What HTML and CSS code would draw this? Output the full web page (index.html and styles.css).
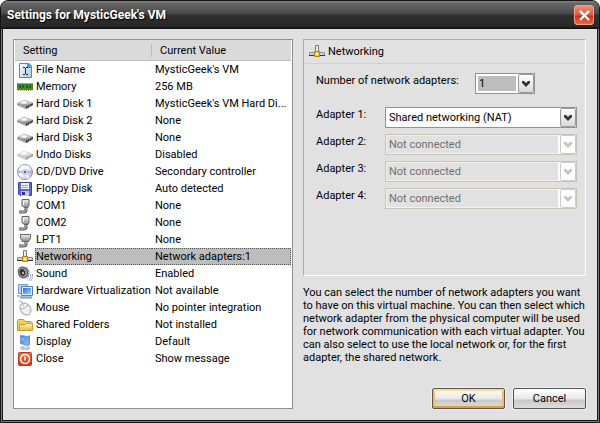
FILE: index.html
```html
<!DOCTYPE html>
<html lang="en">
<head>
<meta charset="utf-8">
<title>Settings for MysticGeek's VM</title>
<link rel="stylesheet" href="styles.css">
</head>
<body>
<svg class="defs" aria-hidden="true">
  <defs>
    <linearGradient id="metal" x2="0" y2="1"><stop stop-color="#f4f4f4"/><stop offset="1" stop-color="#858585"/></linearGradient>
    <linearGradient id="screen" x2="1" y2="1"><stop stop-color="#2d6fd8"/><stop offset="1" stop-color="#8fd4ff"/></linearGradient>
    <linearGradient id="page" x2="1" y2="1"><stop stop-color="#fff"/><stop offset="1" stop-color="#a9c8ee"/></linearGradient>
    <linearGradient id="gold" x2="0" y2="1"><stop stop-color="#fff6c4"/><stop offset="1" stop-color="#eeb834"/></linearGradient>
    <linearGradient id="disc" x2="1" y2="1"><stop stop-color="#d9dbf2"/><stop offset=".4" stop-color="#fff"/><stop offset="1" stop-color="#a6a8dc"/></linearGradient>
    <linearGradient id="red" x2="0" y2="1"><stop stop-color="#f0714e"/><stop offset="1" stop-color="#d8330d"/></linearGradient>
    <symbol id="i-file" viewBox="0 0 16 16"><path d="M2.500 1.500h8l4 4v10h-12z" fill="url(#page)" stroke="#5f82b4"/><path d="M10 1h2l3 3v2h-5z" fill="#3f9af0"/><path d="M6 5.500h2M9 5.500h2M6 12.500h2M9 12.500h2M8.500 6v6" stroke="#222" fill="none"/></symbol>
    <symbol id="i-memory" viewBox="0 0 16 16"><path d="M0 4h16v7H0z" fill="#3f8a35"/><path d="M0 4h16v1H0z" fill="#7eb56a"/><path d="M2 6h2v3H2zM5 6h2v3H5zM9 6h2v3H9zM12 6h2v3h-2z" fill="#1d6a20"/><path d="M1 11.500h14" stroke="#b0a45a" stroke-dasharray="1 1"/></symbol>
    <symbol id="i-disk" viewBox="0 0 16 16"><path d="M0 8l7-4 9 3v2l-7 4-9-4z" fill="#777"/><path d="M0 7.500l7-3.500 9 3-7 3.500z" fill="url(#metal)" stroke="#aaa" stroke-width=".5"/><ellipse cx="7" cy="6.500" rx="3" ry="1.200" fill="#fff"/><path d="M9 10.500l7-3.500v2l-7 4z" fill="#444"/><path d="M0 8l9 3v1.500L0 9z" fill="#aaa"/><path d="M12 10h1" stroke="#8d8"/></symbol>
    <symbol id="i-cd" viewBox="0 0 16 16"><circle cx="8" cy="8" r="7.500" fill="url(#disc)" stroke="#9294bd"/><path d="M8 8L3 3a7 7 0 0 1 3-2zM8 8l5 5a7 7 0 0 1-3 2z" fill="#fff" opacity=".8"/><path d="M8 8l7-2v4zM8 8L1 6v4z" fill="#9ba0e2" opacity=".6"/><circle cx="8" cy="8" r="2.500" fill="#e6e6fa" stroke="#b0b0d8"/><circle cx="8" cy="8" r="1" fill="#333"/></symbol>
    <symbol id="i-floppy" viewBox="0 0 16 16"><path d="M1.500 1.500h13v13H3l-1.500-1.500z" fill="#6265c9" stroke="#41449c"/><path d="M4 2h8v6H4z" fill="#f4f5ff"/><path d="M5 4.500h6M5 6.500h6" stroke="#9a9dca"/><path d="M4 10h8v5H4z" fill="#c5c7df"/><path d="M5 11h3v3H5z" fill="#363a7c"/></symbol>
    <symbol id="i-port" viewBox="0 0 16 16"><path d="M9 9v3q0 2-3 2H2" fill="none" stroke="#555" stroke-width="3"/><path d="M9 9v3q0 2-3 2H2" fill="none" stroke="#ccc" stroke-width="1"/><path d="M5 1.500h7v6l-1 2H7l-2-2z" fill="url(#metal)" stroke="#666"/><path d="M6.500 3v4" stroke="#fff"/></symbol>
    <symbol id="i-lpt" viewBox="0 0 16 16"><path d="M9 9v3q0 2-3 2H2" fill="none" stroke="#555" stroke-width="3"/><path d="M9 9v3q0 2-3 2H2" fill="none" stroke="#ccc" stroke-width="1"/><path d="M3.500 2.500h10v4l-2 3h-6l-2-3z" fill="url(#metal)" stroke="#666"/></symbol>
    <symbol id="i-net" viewBox="0 0 16 16"><path d="M6.500 1.500h3v7h-3z" fill="#e8edf0" stroke="#747a80"/><path d="M.5 8.500h5v3h-5zM10.500 8.500h5v3h-5z" fill="#c4d4e4" stroke="#8a9096"/><path d="M0 11.500h5.500M10.500 11.500H16" stroke="#333"/><path d="M5.500 7.500h5v5h-5z" fill="#f9c83c" stroke="#b78212"/><path d="M7 9h2v2H7z" fill="#fff4a4"/></symbol>
    <symbol id="i-sound" viewBox="0 0 16 16"><path d="M3 1l7 0 3 4-1 5-4 2-4-2z" fill="#b5b5b5"/><ellipse cx="6" cy="6.500" rx="4.700" ry="5.500" transform="rotate(-25 6 6.500)" fill="#999" stroke="#555"/><ellipse cx="5.500" cy="6.500" rx="2.700" ry="3.500" transform="rotate(-25 5.500 6.500)" fill="#333"/><circle cx="6" cy="7" r="1.200" fill="#bbb"/><path d="M11.500 10q.500 2-1.500 3M13.500 8q1.500 4-2 7M15.500 8q.500 4-1.500 7" fill="none" stroke="#a1abf0"/></symbol>
    <symbol id="i-hw" viewBox="0 0 16 16"><path d="M1.500 1.500h9v9h-9z" fill="#b5d2fa" stroke="#769bd2"/><path d="M4.500 3.500h11v9h-11z" fill="#e4eefc" stroke="#5c7fb6"/><path d="M6 5h8v6H6z" fill="url(#screen)"/><path d="M3 13h12v2H3zM0 12h3v2H0z" fill="#aec2de"/><path d="M3 15h12" stroke="#7086a6"/></symbol>
    <symbol id="i-mouse" viewBox="0 0 16 16"><path d="M2 1q3-1 4 3" fill="none" stroke="#aaa"/><ellipse cx="8.500" cy="9" rx="5" ry="6.500" transform="rotate(-35 8.500 9)" fill="#f1f1f1" stroke="#a7a7a7"/><path d="M4 9q4 0 7-4M7 6L5 4" fill="none" stroke="#aaa"/><path d="M13 13q1-2 0-4" stroke="#ccc" stroke-width="2" fill="none"/></symbol>
    <symbol id="i-folder" viewBox="0 0 16 16"><path d="M.5 13.500v-10l1-1h5l1.500 2h6l1 1v8z" fill="#f1cd5f" stroke="#c39227"/><path d="M2.500 13.500v-6h6l1-1h6v7z" fill="url(#gold)" stroke="#cf9f2d"/></symbol>
    <symbol id="i-display" viewBox="0 0 16 16"><ellipse cx="8" cy="14" rx="5" ry="2" fill="#b9c2cb"/><path d="M7 10h3v4H7z" fill="#dce1e6"/><path d="M3.500 1.500l7 1 1 9-8-2z" fill="url(#screen)" stroke="#6f95cc"/><path d="M11 2l2-1v9l-1 2z" fill="#6a8fb8"/><path d="M4 3l5 1-5 4z" fill="#77b4f7"/></symbol>
    <symbol id="i-close" viewBox="0 0 16 16"><rect x="1.500" y="1.500" width="13" height="13" rx="1" fill="url(#red)" stroke="#c6380f"/><circle cx="8" cy="8" r="4.500" fill="none" stroke="#fff" stroke-width="1.500"/><path d="M8 5.500v4" stroke="#fff" stroke-width="1.500"/></symbol>
    <symbol id="i-arrow" viewBox="0 0 8 6"><path d="M0 0h2l2 2 2-2h2v2L4 6 0 2z" fill="currentColor"/></symbol>
  </defs>
</svg>
<main class="window">
  <header class="titlebar">
    <h1>Settings for MysticGeek's VM</h1>
    <button class="window-close" type="button" aria-label="Close window"><svg viewBox="0 0 11 11"><path d="M1 1l9 9M10 1l-9 9" stroke="#fff" stroke-width="2.400"/></svg></button>
  </header>
  <div class="content">
    <section class="list">
      <table>
        <colgroup><col class="col-icon"><col class="col-name"><col></colgroup>
        <thead><tr><th colspan="2" scope="col"><span>Setting</span></th><th scope="col">Current Value</th></tr></thead>
        <tbody>
          <tr><td><svg><use href="#i-file"/></svg></td><td>File Name</td><td>MysticGeek's VM</td></tr>
          <tr><td><svg><use href="#i-memory"/></svg></td><td>Memory</td><td>256 MB</td></tr>
          <tr><td><svg><use href="#i-disk"/></svg></td><td>Hard Disk 1</td><td>MysticGeek's VM Hard Di...</td></tr>
          <tr><td><svg><use href="#i-disk"/></svg></td><td>Hard Disk 2</td><td>None</td></tr>
          <tr><td><svg><use href="#i-disk"/></svg></td><td>Hard Disk 3</td><td>None</td></tr>
          <tr><td><svg class="faded"><use href="#i-disk"/></svg></td><td>Undo Disks</td><td>Disabled</td></tr>
          <tr><td><svg><use href="#i-cd"/></svg></td><td>CD/DVD Drive</td><td>Secondary controller</td></tr>
          <tr><td><svg><use href="#i-floppy"/></svg></td><td>Floppy Disk</td><td>Auto detected</td></tr>
          <tr><td><svg><use href="#i-port"/></svg></td><td>COM1</td><td>None</td></tr>
          <tr><td><svg><use href="#i-port"/></svg></td><td>COM2</td><td>None</td></tr>
          <tr><td><svg><use href="#i-lpt"/></svg></td><td>LPT1</td><td>None</td></tr>
          <tr class="selected"><td><svg><use href="#i-net"/></svg></td><td>Networking</td><td>Network adapters:1</td></tr>
          <tr><td><svg><use href="#i-sound"/></svg></td><td>Sound</td><td>Enabled</td></tr>
          <tr><td><svg><use href="#i-hw"/></svg></td><td>Hardware Virtualization</td><td>Not available</td></tr>
          <tr><td><svg><use href="#i-mouse"/></svg></td><td>Mouse</td><td>No pointer integration</td></tr>
          <tr><td><svg><use href="#i-folder"/></svg></td><td>Shared Folders</td><td>Not installed</td></tr>
          <tr><td><svg><use href="#i-display"/></svg></td><td>Display</td><td>Default</td></tr>
          <tr><td><svg><use href="#i-close"/></svg></td><td>Close</td><td>Show message</td></tr>
        </tbody>
      </table>
    </section>
    <div class="details">
      <section class="panel">
        <h2><svg><use href="#i-net"/></svg>Networking</h2>
        <div class="form">
          <div class="field count"><label for="count">Number of network adapters:</label><span class="select"><select id="count"><option>1</option></select><span class="drop"><svg><use href="#i-arrow"/></svg></span></span></div>
          <div class="field"><label for="a1">Adapter 1:</label><span class="select"><select id="a1"><option>Shared networking (NAT)</option></select><span class="drop"><svg><use href="#i-arrow"/></svg></span></span></div>
          <div class="field"><label for="a2">Adapter 2:</label><span class="select off"><select id="a2" disabled><option>Not connected</option></select><span class="drop"><svg><use href="#i-arrow"/></svg></span></span></div>
          <div class="field"><label for="a3">Adapter 3:</label><span class="select off"><select id="a3" disabled><option>Not connected</option></select><span class="drop"><svg><use href="#i-arrow"/></svg></span></span></div>
          <div class="field"><label for="a4">Adapter 4:</label><span class="select off"><select id="a4" disabled><option>Not connected</option></select><span class="drop"><svg><use href="#i-arrow"/></svg></span></span></div>
        </div>
      </section>
      <p>You can select the number of network adapters you want to have on this virtual machine. You can then select which network adapter from the physical computer will be used for network communication with each virtual adapter. You can also select to use the local network or, for the first adapter, the shared network.</p>
      <div class="actions"><button class="btn default" type="button">OK</button><button class="btn" type="button">Cancel</button></div>
    </div>
  </div>
</main>
</body>
</html>
```
FILE: styles.css
```css
* { box-sizing: border-box; }
body {
  margin: 0;
  background: #fff;
  color: #000;
  font: 11px/13px Roboto, "Noto Sans", sans-serif;
}
button, select { font: inherit; color: inherit; }
.defs { position: absolute; width: 0; height: 0; }
.window {
  display: flex;
  flex-direction: column;
  min-height: 100vh;
  border: 1px solid #151515;
  border-radius: 8px 8px 0 0;
  background: #e1e1e1;
  box-shadow: inset 0 0 0 1px #777, inset 0 0 0 2px #181818;
  overflow: hidden;
}
.titlebar {
  display: flex;
  align-items: center;
  justify-content: space-between;
  height: 28px;
  padding: 0 5px 0 6px;
  background: linear-gradient(#858585, #686868 2px, #484848 13px, #303030 14px, #272727 26px, #111 27px);
}
.titlebar h1 {
  margin: 0;
  color: #fff;
  font: bold 12px/16px "DejaVu Sans Condensed", sans-serif;
  font: bold 12px/16px Roboto, sans-serif;
  text-shadow: 1px 1px 1px #000;
}
.window-close {
  display: grid;
  place-items: center;
  width: 20px;
  height: 20px;
  padding: 0;
  border: 1px solid #f0a090;
  border-radius: 3px;
  background: linear-gradient(#ee8d7b, #df5a43 9px, #d22b0c 10px, #ee6a42);
}
.window-close svg { width: 11px; height: 11px; }
.content {
  display: grid;
  flex: 1;
  grid-template-columns: 280fr 283fr;
  gap: 10px;
  padding: 10px 13px 13px 12px;
}
.list { border: 1px solid #919191; background: #fff; padding: 0 1px; min-width: 0; }
table { width: 100%; border-collapse: separate; border-spacing: 0; table-layout: fixed; }
.col-icon { width: 20px; }
.col-name { width: 117px; }
th {
  height: 21px;
  padding: 0 8px;
  border-bottom: 1px solid #bdbdbd;
  background: #dadada;
  font-weight: normal;
  text-align: left;
}
th span { display: block; border-right: 1px solid #bbb; margin-right: -8px; }
td { height: 17px; padding: 0 0 0 3px; white-space: nowrap; line-height: 15px; }
td:first-child { padding: 0; }
td:nth-child(2) { padding: 0 0 0 1px; }
td svg, h2 svg { display: block; width: 16px; height: 16px; }
td:first-child svg { margin-left: 2px; }
.faded { opacity: .5; }
.selected td:not(:first-child) { background: #bdbdbd; border: 1px dotted #555; border-width: 1px 0; line-height: 13px; }
.selected td:nth-child(2) { border-left-width: 1px; padding-left: 0; }
.selected td:last-child { border-right-width: 1px; }
.details { display: flex; flex-direction: column; min-width: 0; }
.panel { flex: 1; border: 1px solid; border-color: #acacac #fff #fff #acacac; }
h2 {
  display: flex;
  align-items: center;
  gap: 3px;
  height: 24px;
  margin: 0;
  padding: 0 5px;
  border-bottom: 1px solid #d0d0d0;
  font-size: 11px;
  font-weight: normal;
}
.form { display: flex; flex-direction: column; gap: 6px; padding: 9px 8px 0 12px; }
.field { display: flex; justify-content: space-between; }
.field label { line-height: 15px; white-space: nowrap; }
.field .select { flex: 0 0 192px; }
.count { margin-bottom: 7px; }
.count .select { flex-basis: 60px; margin-right: 42px; }
.select { position: relative; display: block; height: 21px; }
.select select {
  display: block;
  width: 100%;
  height: 21px;
  margin: 0;
  padding: 0 20px 0 3px;
  border: 1px solid #929292;
  border-radius: 0;
  background: #fff;
  appearance: none;
  opacity: 1;
}
.count select { background: #bdbdbd; box-shadow: inset 0 0 0 2px #fff; }
.drop {
  position: absolute;
  top: 1px;
  right: 1px;
  display: grid;
  place-items: center;
  width: 16px;
  height: 19px;
  border: 1px solid #999;
  border-radius: 2px;
  background: linear-gradient(#fff, #d8d8d8);
  box-shadow: -2px 0 #fff;
  color: #333;
  pointer-events: none;
}
.drop svg { width: 8px; height: 6px; }
.off select { border-color: #c6c5b5; background: #e1e1e1; color: #707070; box-shadow: inset 0 0 0 1px #f4f2e4; }
.off .drop { border-color: #ccc; background: #fff; color: #c3c3c3; }
p { margin: 10px 0 24px; }
.actions { display: flex; justify-content: flex-end; gap: 8px; }
.btn {
  width: 73px;
  height: 21px;
  padding: 0;
  border: 1px solid #555;
  border-radius: 2px;
  background: linear-gradient(#fff, #e6e6e6 10px, #c8c8c8 11px, #ddd);
  box-shadow: 0 0 0 1px #efefef;
}
.btn.default { box-shadow: 0 0 0 1px #efefef, inset 0 2px #fbdf95, inset 0 -2px #e59a32, inset 2px 0 #f3bf65, inset -2px 0 #f3bf65; }
```
